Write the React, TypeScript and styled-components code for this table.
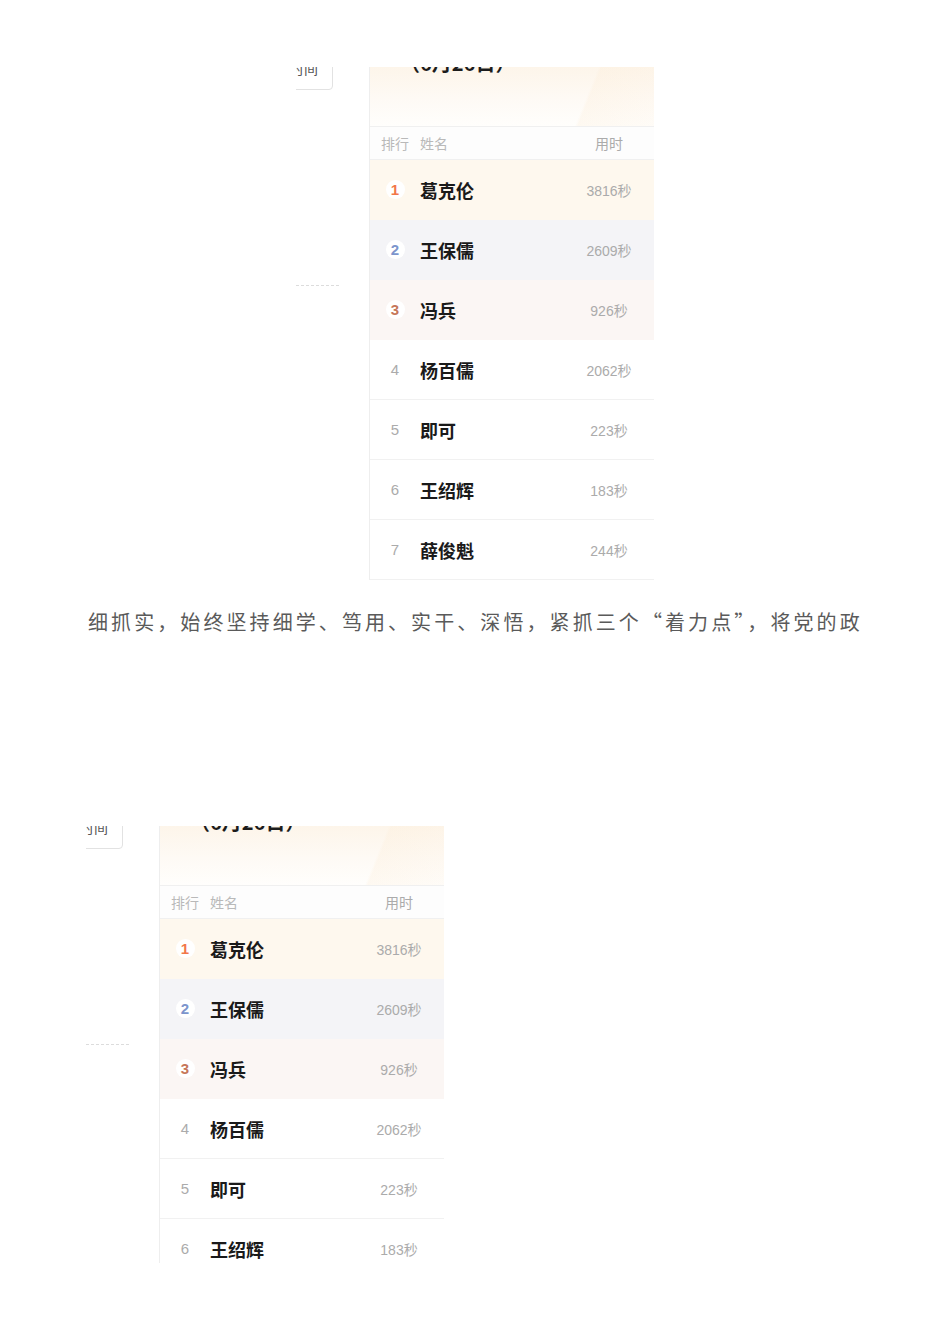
import React from 'react'
import styled, { createGlobalStyle } from 'styled-components'

const GlobalStyle = createGlobalStyle`
  html, body {
    margin: 0;
    padding: 0;
    background: #ffffff;
  }
  body {
    font-family: 'Liberation Sans', 'Noto Sans CJK SC', sans-serif;
  }
`

const Page = styled.div`
  width: 950px;
  min-height: 1344px;
  padding-top: 67px;
  box-sizing: border-box;
  background: #ffffff;
`

const Shot = styled.div<{ $left: number; $height: number; $top: number }>`
  display: flex;
  align-items: flex-start;
  width: 358px;
  height: ${(p) => p.$height}px;
  margin-left: ${(p) => p.$left}px;
  margin-top: ${(p) => p.$top}px;
  overflow: hidden;
`

const Side = styled.div`
  display: flex;
  flex-direction: column;
  width: 73px;
  flex-shrink: 0;
`

const SortButton = styled.div`
  display: flex;
  align-items: center;
  justify-content: flex-end;
  width: 64px;
  height: 44px;
  margin-left: -27px;
  margin-top: -21px;
  padding-right: 14px;
  box-sizing: border-box;
  border: 1px solid #e2e2e2;
  border-radius: 4px;
  font-family: 'Noto Sans CJK SC', sans-serif;
  font-size: 14px;
  color: #555555;
  background: #ffffff;
`

const Dash = styled.div`
  width: 44px;
  height: 1px;
  margin-top: 195px;
  background: repeating-linear-gradient(
    to right,
    #dcdcdc 0,
    #dcdcdc 3px,
    transparent 3px,
    transparent 5px
  );
`

const Board = styled.div`
  display: flex;
  flex-direction: column;
  width: 285px;
  flex-shrink: 0;
  border-left: 1px solid #eeeeee;
`

const BoardHead = styled.div`
  height: 59px;
  padding-left: 30px;
  background:
    linear-gradient(112deg, transparent 74%, rgba(252, 236, 214, 0.28) 75%, rgba(253, 242, 228, 0.2) 100%),
    linear-gradient(180deg, #fdf5ea 0%, #fefaf5 55%, #fffefc 100%);
`

const Title = styled.div`
  margin-top: -17px;
  font-family: 'Noto Sans CJK SC', sans-serif;
  font-size: 20px;
  line-height: 26px;
  font-weight: 700;
  color: #1c1c1c;
`

const ColHead = styled.div`
  display: flex;
  align-items: center;
  height: 32px;
  border-top: 1px solid #f0f0f0;
  border-bottom: 1px solid #f0f0f0;
  background: #fdfdfd;
  font-family: 'Noto Sans CJK SC', sans-serif;
  font-size: 14px;
  color: #b9b9b9;
`

const RankCell = styled.div`
  display: flex;
  align-items: center;
  justify-content: center;
  width: 50px;
  flex-shrink: 0;
`

const NameCell = styled.div`
  flex: 1;
  font-family: 'Noto Sans CJK SC', sans-serif;
  font-size: 18px;
  font-weight: 700;
  color: #1a1a1a;
`

const TimeCell = styled.div`
  width: 92px;
  flex-shrink: 0;
  text-align: center;
  font-family: 'Liberation Sans', 'Noto Sans CJK SC', sans-serif;
  font-size: 14px;
  color: #ababab;
`

const HeadLabel = styled.div`
  flex: 1;
`

const rowBg: Record<number, string> = {
  1: '#fef8ee',
  2: '#f4f4f7',
  3: '#fbf6f4',
}

const rankColor: Record<number, string> = {
  1: '#f2774a',
  2: '#7c95cc',
  3: '#c6775a',
}

const Row = styled.div<{ $rank: number }>`
  display: flex;
  align-items: center;
  height: 60px;
  flex-shrink: 0;
  box-sizing: border-box;
  background: ${(p) => rowBg[p.$rank] ?? '#ffffff'};
  border-bottom: 1px solid ${(p) => (p.$rank <= 3 ? rowBg[p.$rank] : '#f1f1f1')};
`

const RankBadge = styled.span<{ $rank: number }>`
  display: inline-flex;
  align-items: center;
  justify-content: center;
  width: 19px;
  height: 19px;
  border-radius: 50%;
  background: ${(p) => (p.$rank <= 3 ? '#ffffff' : 'transparent')};
  font-family: 'Liberation Sans', sans-serif;
  font-size: 15px;
  font-weight: ${(p) => (p.$rank <= 3 ? 700 : 400)};
  color: ${(p) => rankColor[p.$rank] ?? '#ababab'};
`

const Para = styled.p`
  margin: 24px 0 0 88px;
  font-family: 'Noto Sans CJK SC', sans-serif;
  font-size: 20px;
  line-height: 30px;
  letter-spacing: 3.08px;
  color: #5a5a5a;
  white-space: nowrap;
`

const players = [
  { rank: 1, name: '葛克伦', time: 3816 },
  { rank: 2, name: '王保儒', time: 2609 },
  { rank: 3, name: '冯兵', time: 926 },
  { rank: 4, name: '杨百儒', time: 2062 },
  { rank: 5, name: '即可', time: 223 },
  { rank: 6, name: '王绍辉', time: 183 },
  { rank: 7, name: '薛俊魁', time: 244 },
]

const Leaderboard: React.FC<{ left: number; top: number; height: number }> = ({ left, top, height }) => (
  <Shot $left={left} $top={top} $height={height}>
    <Side>
      <SortButton>时间</SortButton>
      <Dash />
    </Side>
    <Board>
      <BoardHead>
        <Title>（6月26日）</Title>
      </BoardHead>
      <ColHead>
        <RankCell>排行</RankCell>
        <HeadLabel>姓名</HeadLabel>
        <TimeCell>用时</TimeCell>
      </ColHead>
      {players.map((p) => (
        <Row key={p.rank} $rank={p.rank}>
          <RankCell>
            <RankBadge $rank={p.rank}>{p.rank}</RankBadge>
          </RankCell>
          <NameCell>{p.name}</NameCell>
          <TimeCell>{`${p.time}秒`}</TimeCell>
        </Row>
      ))}
    </Board>
  </Shot>
)

export default function App() {
  return (
    <Page>
      <GlobalStyle />
      <Leaderboard left={296} top={0} height={516} />
      <Para>细抓实，始终坚持细学、笃用、实干、深悟，紧抓三个“着力点”，将党的政</Para>
      <Leaderboard left={86} top={189} height={437} />
    </Page>
  )
}
